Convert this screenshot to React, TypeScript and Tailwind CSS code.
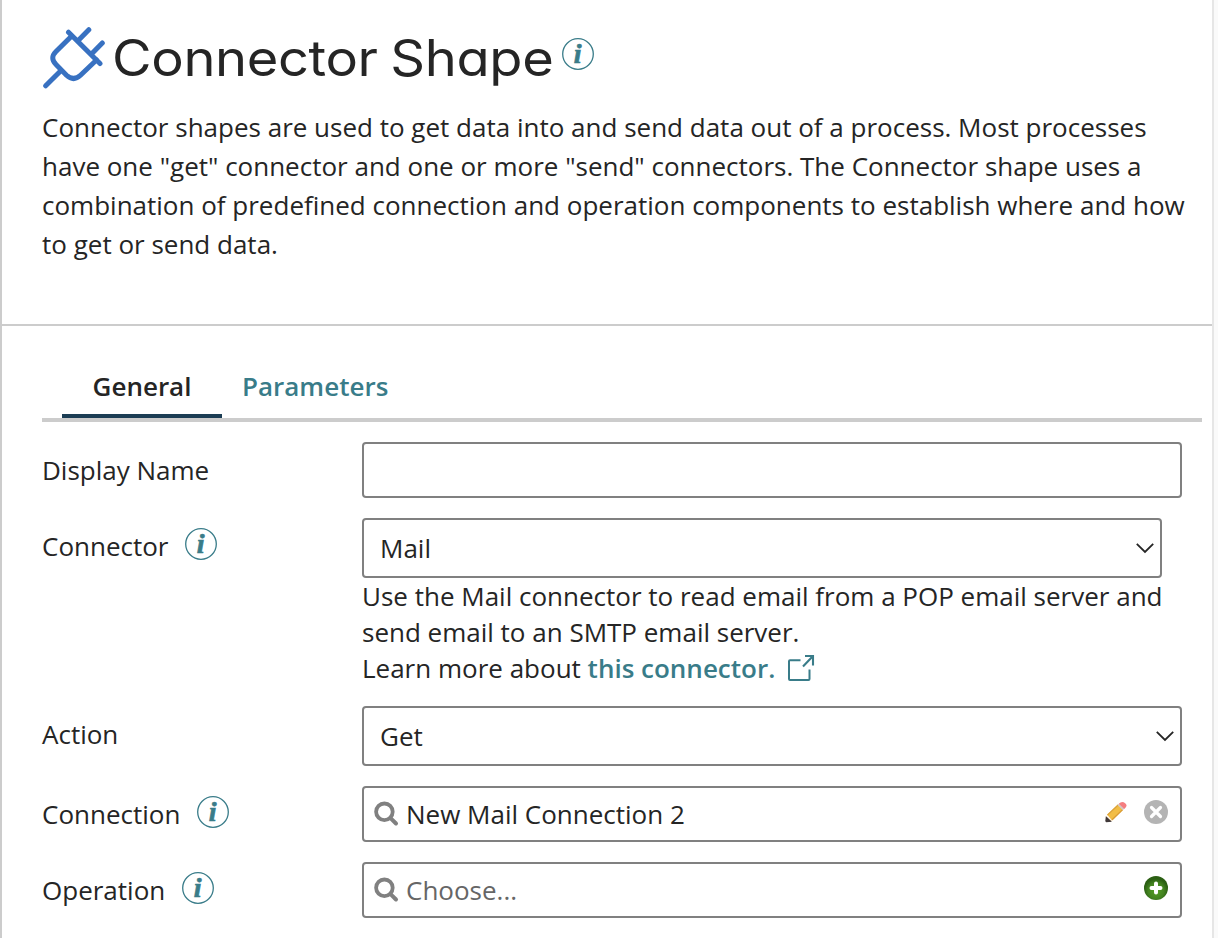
import type { ReactNode } from "react";

function PlugIcon() {
  return (
    <svg className="block h-[62px] w-16 shrink-0" viewBox="0 0 64 62" fill="none" stroke="#3871c1" strokeWidth="5" strokeLinecap="round">
      <path d="M26.5 5.2 58 36.5M46.8 2.7 36.5 13.2M60.3 16 50 26.5M3.7 58.8 18.8 43.8" />
      <path d="M29.2 9.5 14 24.6Q7.5 31 14 37.6L24.5 48.2Q31.5 54.8 38.5 48.2L54.5 33" />
    </svg>
  );
}

function InfoIcon() {
  return (
    <svg className="block h-8 w-8 shrink-0" viewBox="0 0 32 32">
      <circle cx="16" cy="16" r="15.3" fill="none" stroke="#397c89" strokeWidth="1.3" />
      <text x="11.7" y="24.6" fill="#397c89" stroke="#397c89" strokeWidth=".7" className="font-['Liberation_Serif',serif] text-[28px] font-bold italic">i</text>
    </svg>
  );
}

function ExternalIcon() {
  return (
    <svg className="block h-7 w-7 shrink-0" viewBox="0 0 28 28" fill="none" stroke="#397c89" strokeWidth="2">
      <path d="M12.5 6.2H2Q1 6.2 1 7.2V25Q1 26 2 26H20.5Q21.5 26 21.5 25V15.5" />
      <path d="M17 2H25V11.5M25 2 15 12.5" strokeWidth="2.1" />
    </svg>
  );
}

function Chevron() {
  return (
    <svg className="block h-3 w-[18px] shrink-0" viewBox="0 0 18 12" fill="none" stroke="#252525" strokeWidth="1.8">
      <path d="M.8 1.8 9 10 17.2 1.8" />
    </svg>
  );
}

function SearchIcon() {
  return (
    <svg className="block h-[26px] w-[26px] shrink-0" viewBox="0 0 26 26" fill="none" stroke="#808080">
      <circle cx="10.4" cy="10.8" r="8.3" strokeWidth="3.8" />
      <path d="m16.8 17.3 5.2 5.2" strokeWidth="4" strokeLinecap="round" />
    </svg>
  );
}

function PencilIcon() {
  return (
    <svg className="block h-6 w-6 shrink-0" viewBox="0 0 24 24">
      <path d="M2.2 16 8 21 2.7 21.8 1.8 21Z" fill="#ecc9a0" />
      <path d="M2.3 17.5 6.5 21.3 2.5 21.7 1.9 21Z" fill="#41393a" stroke="#41393a" strokeWidth="1.2" />
      <path d="M3.1 14.8 13.9 4.6 19.1 9.8 8.1 20.4Z" fill="#f2bd45" />
      <path d="M3.5 15 14.1 5" stroke="#dba23a" strokeWidth="1.1" />
      <path d="M8.1 19.8 18.7 9.6" stroke="#d99b35" strokeWidth="1.3" />
      <path d="M13.6 5 15.2 3.4 20.4 8.6 18.8 10.2Z" fill="#d4c8c5" />
      <path d="M14.8 3.7Q18 .5 21.2 3.2T20.3 8.9Z" fill="#f47e80" />
    </svg>
  );
}

function ClearIcon() {
  return (
    <svg className="block h-6 w-6 shrink-0" viewBox="0 0 24 24">
      <circle cx="12" cy="12" r="12" fill="#b4b4b4" />
      <path d="m7.5 7.5 9 9m0-9-9 9" stroke="#fff" strokeWidth="3.2" strokeLinecap="round" />
    </svg>
  );
}

function AddIcon() {
  return (
    <svg className="block h-6 w-6 shrink-0" viewBox="0 0 24 24">
      <defs>
        <radialGradient id="add-green" cx="50%" cy="62%" r="50%">
          <stop offset="0" stopColor="#56a025" />
          <stop offset=".65" stopColor="#438320" />
          <stop offset="1" stopColor="#2b5f13" />
        </radialGradient>
      </defs>
      <circle cx="12" cy="12" r="12" fill="url(#add-green)" />
      <path d="M12 7.5v9M7.5 12h9" stroke="#fff" strokeWidth="4" strokeLinecap="round" />
    </svg>
  );
}

function Row({ label, info, children }: { label: string; info?: boolean; children: ReactNode }) {
  return (
    <div className="flex items-start">
      <div className="flex w-[320px] shrink-0 items-start gap-[16.5px] pt-2.5">
        <span className="leading-[36px]">{label}</span>
        {info && <InfoIcon />}
      </div>
      {children}
    </div>
  );
}

const box = "flex items-center rounded-[4px] border-2 border-[#808080] bg-white";

export default function App() {
  return (
    <div className="flex h-[938px] w-[1218px] overflow-hidden bg-[#fafafa] font-['Open_Sans',sans-serif] text-[26px] text-[#252525]">
      <main className="h-full w-[1214px] border-r-2 border-l-2 border-r-[#e6e6e6] border-l-[#ccc] bg-white">
        <header className="h-[326px] border-b-2 border-[#ccc] pt-[27px] pr-6 pl-10">
          <div className="flex h-[81px] items-start">
            <PlugIcon />
            <h1 className="ml-1.5 w-[450px] origin-left scale-x-[1.085] whitespace-nowrap font-['Inter',sans-serif] text-[50px] leading-[62px] font-normal tracking-[-0.35px] [font-feature-settings:'cv11'] [word-spacing:-2px]">
              Connector Shape
            </h1>
            <div className="pt-[11px]">
              <InfoIcon />
            </div>
          </div>
          <p className="leading-[39px] whitespace-nowrap">
            Connector shapes are used to get data into and send data out of a process. Most processes
            <br />
            have one "get" connector and one or more "send" connectors. The Connector shape uses a
            <br />
            combination of predefined connection and operation components to establish where and how
            <br />
            to get or send data.
          </p>
        </header>

        <section className="pt-[30px] pl-10">
          <nav className="flex h-[66px] w-[1160px] border-b-4 border-[#ccc] pl-5">
            <button className="h-[62px] w-[160px] border-b-4 border-[#1b3d54] pt-0.5 font-semibold">General</button>
            <button className="ml-5 h-[62px] pt-0.5 pb-1 font-semibold text-[#397c89]">Parameters</button>
          </nav>

          <div className="flex flex-col gap-5 pt-5">
            <Row label="Display Name">
              <div className={`${box} h-14 w-[820px]`} />
            </Row>
            <Row label="Connector" info>
              <div className="h-[168px]">
                <div className={`${box} h-[60px] w-[800px] justify-between pr-[6px] pl-4`}>
                  <span>Mail</span>
                  <Chevron />
                </div>
                <p className="leading-[36px] whitespace-nowrap">
                  Use the Mail connector to read email from a POP email server and
                  <br />
                  send email to an SMTP email server.
                </p>
                <div className="flex leading-[36px]">
                  <span className="whitespace-pre">Learn more about </span>
                  <a className="font-semibold text-[#397c89]">this connector.</a>
                  <span className="ml-[13px] pt-1">
                    <ExternalIcon />
                  </span>
                </div>
              </div>
            </Row>
            <Row label="Action">
              <div className={`${box} h-[60px] w-[820px] justify-between pr-[6px] pl-4`}>
                <span>Get</span>
                <Chevron />
              </div>
            </Row>
            <Row label="Connection" info>
              <div className={`${box} h-14 w-[820px] pr-3 pl-[10px]`}>
                <SearchIcon />
                <span className="ml-[6px] flex-1">New Mail Connection 2</span>
                <span className="flex gap-4 pb-1">
                  <PencilIcon />
                  <ClearIcon />
                </span>
              </div>
            </Row>
            <Row label="Operation" info>
              <div className={`${box} h-14 w-[820px] pr-3 pl-[10px]`}>
                <SearchIcon />
                <span className="ml-[6px] flex-1 text-[#666]">Choose...</span>
                <span className="pb-1">
                  <AddIcon />
                </span>
              </div>
            </Row>
          </div>
        </section>
      </main>
    </div>
  );
}
